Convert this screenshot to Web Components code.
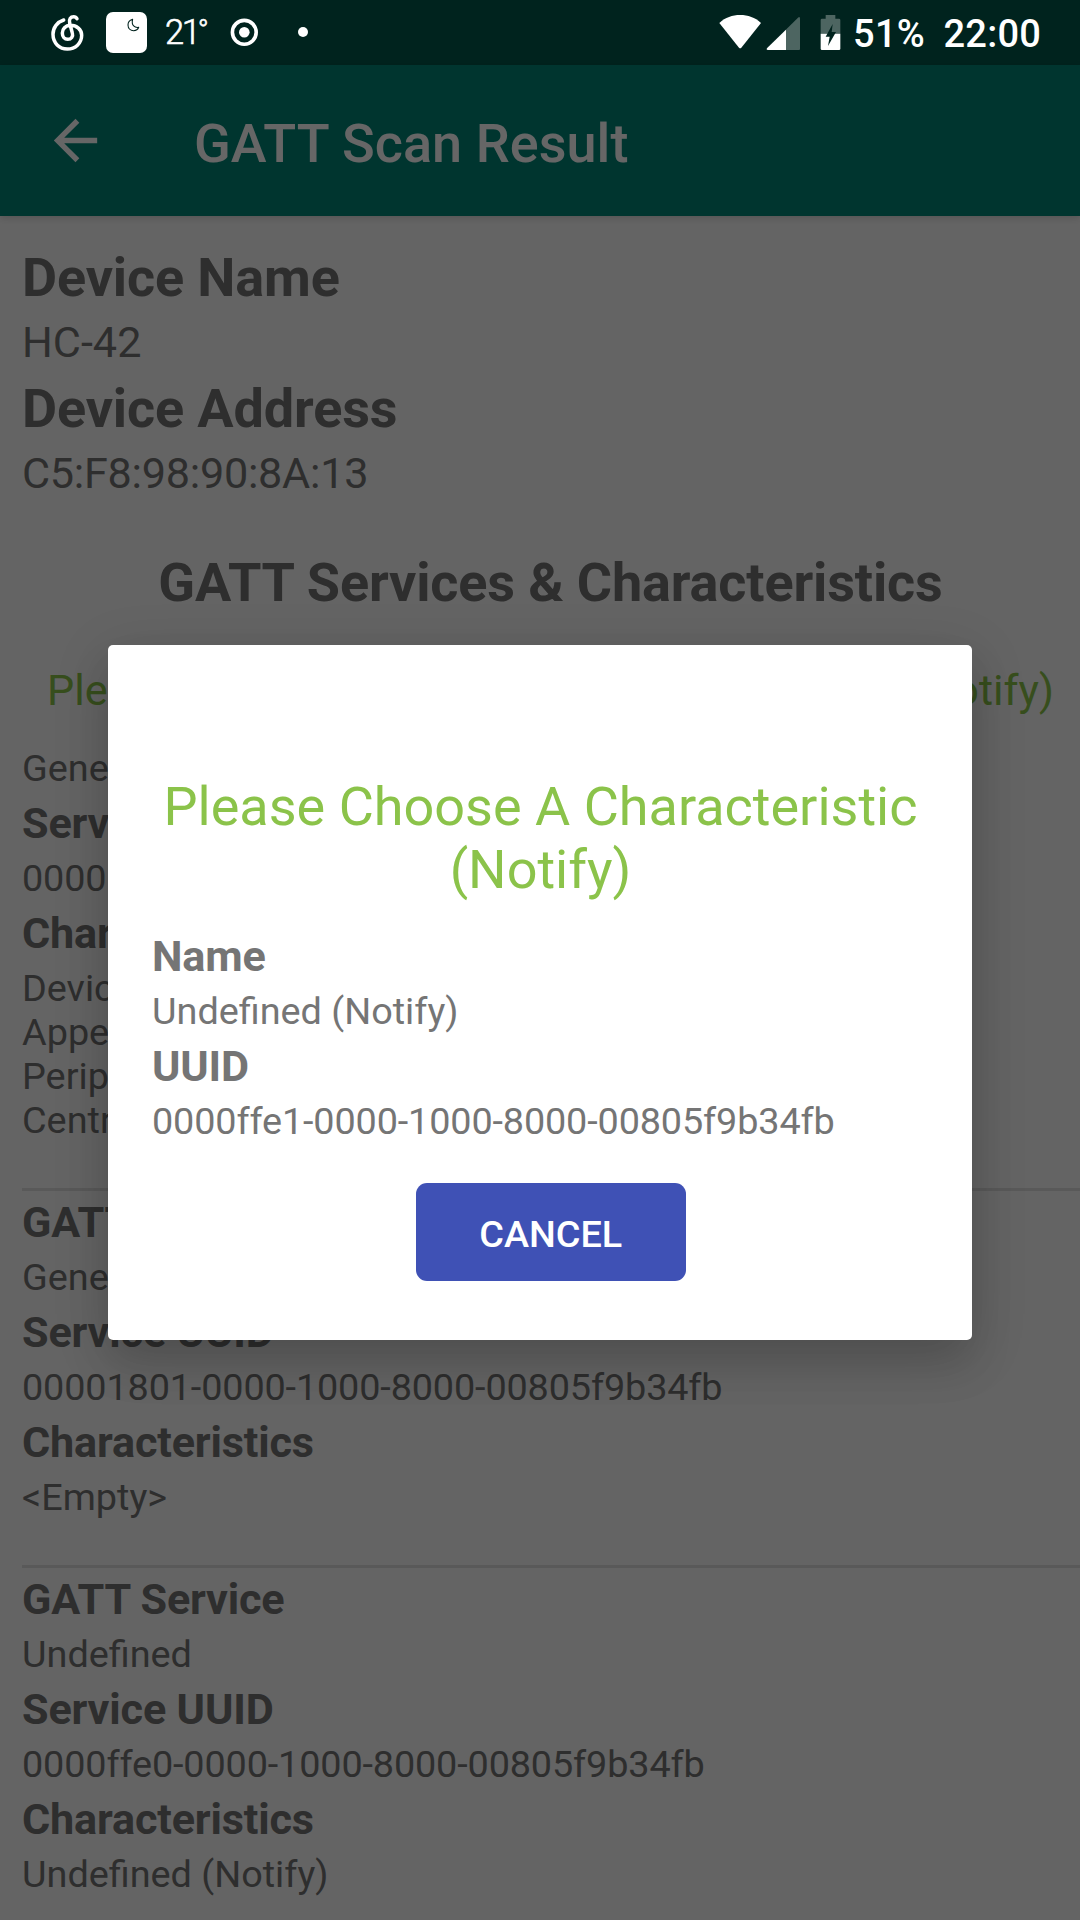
<!DOCTYPE html>
<html lang="en">
<head>
<meta charset="utf-8">
<title>GATT Scan Result</title>
<style>
  html, body { margin: 0; padding: 0; }
  body { width: 1080px; height: 1920px; overflow: hidden; background: #fafafa; font-family: Roboto, "Noto Sans", sans-serif; }
</style>
</head>
<body>
<gatt-screen>
  <status-bar slot="status"></status-bar>
  <app-bar slot="bar">GATT Scan Result</app-bar>
  <device-field label="Device Name">HC-42</device-field>
  <device-field label="Device Address" numeric>C5:F8:98:90:8A:13</device-field>
  <section-title>GATT Services &amp; Characteristics</section-title>
  <choose-hint>Please Choose A Characteristic To Operate (Notify)</choose-hint>
  <service-card>
    <service-value>Generic Access</service-value>
    <service-label>Service UUID</service-label>
    <service-value numeric>00001800-0000-1000-8000-00805f9b34fb</service-value>
    <service-label>Characteristics</service-label>
    <service-value>Device Name</service-value>
    <service-value>Appearance</service-value>
    <service-value>Peripheral Parameters</service-value>
    <service-value>Central Address Resolution</service-value>
  </service-card>
  <service-card divided>
    <service-label>GATT Service</service-label>
    <service-value>Generic Attribute</service-value>
    <service-label>Service UUID</service-label>
    <service-value numeric>00001801-0000-1000-8000-00805f9b34fb</service-value>
    <service-label>Characteristics</service-label>
    <service-value>&lt;Empty&gt;</service-value>
  </service-card>
  <service-card divided>
    <service-label>GATT Service</service-label>
    <service-value>Undefined</service-value>
    <service-label>Service UUID</service-label>
    <service-value numeric>0000ffe0-0000-1000-8000-00805f9b34fb</service-value>
    <service-label>Characteristics</service-label>
    <service-value>Undefined (Notify)</service-value>
  </service-card>
  <choose-dialog slot="dialog" heading="Please Choose A Characteristic (Notify)">
    <service-label>Name</service-label>
    <service-value>Undefined (Notify)</service-value>
    <service-label>UUID</service-label>
    <service-value numeric>0000ffe1-0000-1000-8000-00805f9b34fb</service-value>
    <flat-button slot="action">CANCEL</flat-button>
  </choose-dialog>
</gatt-screen>

<script>
const define = (name, html) => customElements.define(name, class extends HTMLElement {
  constructor() {
    super();
    const t = document.createElement('template');
    t.innerHTML = typeof html === 'function' ? html(this) : html;
    this.attachShadow({ mode: 'open' }).append(t.content.cloneNode(true));
  }
});

define('gatt-screen', `
  <style>
    :host { display: block; position: relative; width: 1080px; height: 1920px; overflow: hidden; background: #fafafa; color: #737373; }
    .page { display: flex; flex-direction: column; height: 1920px; }
    main { padding: 26px 0 0 22px; flex: 1; min-height: 0; overflow: hidden; }
    .scrim { position: absolute; inset: 0; background: rgba(0,0,0,.6); display: flex; justify-content: center; align-items: flex-start; padding-top: 645px; box-sizing: border-box; }
    .icons { position: absolute; inset: 0 0 auto 0; }
  </style>
  <div class="page"><app-status-space></app-status-space><slot name="bar"></slot><main><slot></slot></main></div>
  <div class="scrim"><slot name="dialog"></slot></div>
  <div class="icons"><slot name="status"></slot></div>`);

define('app-status-space', `<style>:host { display: block; flex: none; height: 65px; background: #00574b; }</style>`);

define('status-bar', `
  <style>
    :host { display: flex; height: 65px; width: 1080px; color: #fff; white-space: pre; }
    svg { display: block; flex: none; height: 65px; }
    .temp { font-size: 34.500px; font-weight: 300; line-height: 40px; margin-top: 11.500px; width: 42px; letter-spacing: -2.500px; -webkit-text-stroke: .6px #fff; }
    .temp i { font-style: normal; font-size: 29px; line-height: 1px; vertical-align: 4px; margin-left: -.5px; }
    .t { font-size: 38px; font-weight: 500; line-height: 44px; margin-top: 12px; }
    .gap { flex: 1; }
  </style>
    <svg viewBox="30 0 135 65" style="margin-left:30px;width:135px">
      <g transform="translate(30 0) scale(.33333)" fill="none" stroke="#fff" stroke-width="10.5" stroke-linecap="round">
        <path d="M101 60C82 66 69 83 69 103C69 129 88 147 112 147C136 147 155 130 155 106C155 88 140 76 121 76C106 76 97 87 97 99C97 111 104 118 113 118C124 118 130 109 127 99L119 70C116 57 122 50 131 50C136 50 139 52 141 56"/>
      </g>
      <rect x="106" y="12" width="41" height="41" rx="7" fill="#fff"/>
      <path d="M132.600 19.300C129.500 20.200 128 22.600 128 25C128 28.500 130.600 30.700 133.600 30.700C136 30.700 137.900 29.500 138.700 27.300C135 28 131 25.500 132.600 19.300Z" fill="none" stroke="#00231e" stroke-width="1.100" stroke-linejoin="round"/>
    </svg>
    <span class="temp">21<i>°</i></span>
    <svg width="120" viewBox="207 0 120 65">
      <circle cx="244.300" cy="32.300" r="11.900" fill="none" stroke="#fff" stroke-width="3.600"/>
      <circle cx="244.300" cy="32.300" r="5.300" fill="#fff"/>
      <circle cx="303" cy="32" r="5" fill="#fff"/>
    </svg>
    <span class="gap"></span>
    <svg width="153" viewBox="700 0 153 65">
      <g transform="translate(700 0) scale(.33333)" fill="#fff">
        <path d="M58 69C76 52 97 45 120.500 45S165 52 183 69L124 143Q120.500 147 117 143Z"/>
        <path d="M204 150Q198 150 201 145L294 53Q300 48 300 56V147Q300 150 297 150Z" opacity=".3"/>
        <path d="M204 150Q198 150 201 145L258 89V150Z"/>
        <path d="M377 56V45H406V56H417Q421 56 421 60V101H362V60Q362 56 366 56Z" opacity=".3"/>
        <path d="M362 101H421V146Q421 150 417 150H366Q362 150 362 146Z"/>
        <path d="M398 72L377 110H389L384 138L408 96H395Z" fill="#00231e"/>
      </g>
    </svg>
    <span class="t" style="width:90.500px;letter-spacing:.3px">51%</span>
    <span class="t" style="width:136.500px;letter-spacing:.25px">22:00</span>`);

define('app-bar', `
  <style>
    :host { display: flex; flex: none; height: 151px; background: #008577; color: #fff; box-shadow: 0 2px 7px rgba(0,0,0,.16); position: relative; align-items: center; }
    svg { width: 65px; height: 65px; margin-left: 43px; }
    h1 { margin: 6px 0 0 86px; font-size: 54px; font-weight: 500; line-height: 63px; letter-spacing: .05px; }
  </style>
  <svg viewBox="0 0 24 24" fill="#fff"><path d="M20 11H7.830l5.590-5.590L12 4l-8 8 8 8 1.410-1.410L7.830 13H20v-2z"/></svg>
  <h1><slot></slot></h1>`);

define('device-field', el => `
  <style>
    :host { display: block; height: 131px; }
    b { display: block; font-size: 54px; line-height: 71px; letter-spacing: -.13px; }
    span { display: block; font-size: 43.200px; line-height: 59px; }
    :host([numeric]) span { letter-spacing: -.28px; }
  </style>
  <b>${el.getAttribute('label')}</b><span><slot></slot></span>`);

define('section-title', `
  <style>:host { display: block; margin: 43px 1px 43px 0; text-align: center; font-size: 54px; font-weight: 700; line-height: 71px; letter-spacing: -.15px; }</style><slot></slot>`);

define('choose-hint', `
  <style>:host { display: block; margin: 0 26px 26px 25px; color: #8bc34a; font-size: 43.200px; line-height: 59px; text-align: justify; text-align-last: justify; white-space: nowrap; }</style><slot></slot>`);

define('service-card', `
  <style>
    :host { display: flex; flex-direction: column; padding-bottom: 46px; }
    :host([divided]) { border-top: 3px solid #dfdfdf; }
    :host([divided]) ::slotted(service-label:first-child) { margin-top: 6px; }
  </style><slot></slot>`);

define('service-label', `
  <style>:host { display: block; margin: 8px 0 7px; font-size: 43.200px; font-weight: 700; line-height: 51px; letter-spacing: -.17px; }</style><slot></slot>`);

define('service-value', `
  <style>:host { display: block; font-size: 37.800px; line-height: 44px; } :host([numeric]) { letter-spacing: -.135px; }</style><slot></slot>`);

define('flat-button', `
  <style>
    :host { display: block; }
    button { display: block; width: 270px; height: 98px; padding: 4px 0 0; border: 0; border-radius: 11px; background: #3f51b5; color: #fff; font: 500 37.800px/44px Roboto, sans-serif; }
  </style><button><slot></slot></button>`);

define('choose-dialog', el => `
  <style>
    :host { display: block; box-sizing: border-box; width: 864px; height: 695px; padding: 130px 22px 0 44px; background: #fff; color: #757575; border-radius: 5px;
      box-shadow: 0 26px 44px rgba(0,0,0,.11), 0 12px 56px rgba(0,0,0,.15); }
    h2 { margin: 0 21px 22px 0; color: #8bc34a; text-align: center; font-size: 54px; font-weight: 400; line-height: 63px; }
    .body { display: flex; flex-direction: column; }
    .action { display: flex; justify-content: center; margin: 40px .600px 0 0; }
  </style>
  <h2>${el.getAttribute('heading')}</h2>
  <div class="body"><slot></slot></div>
  <div class="action"><slot name="action"></slot></div>`);
</script>
</body>
</html>
